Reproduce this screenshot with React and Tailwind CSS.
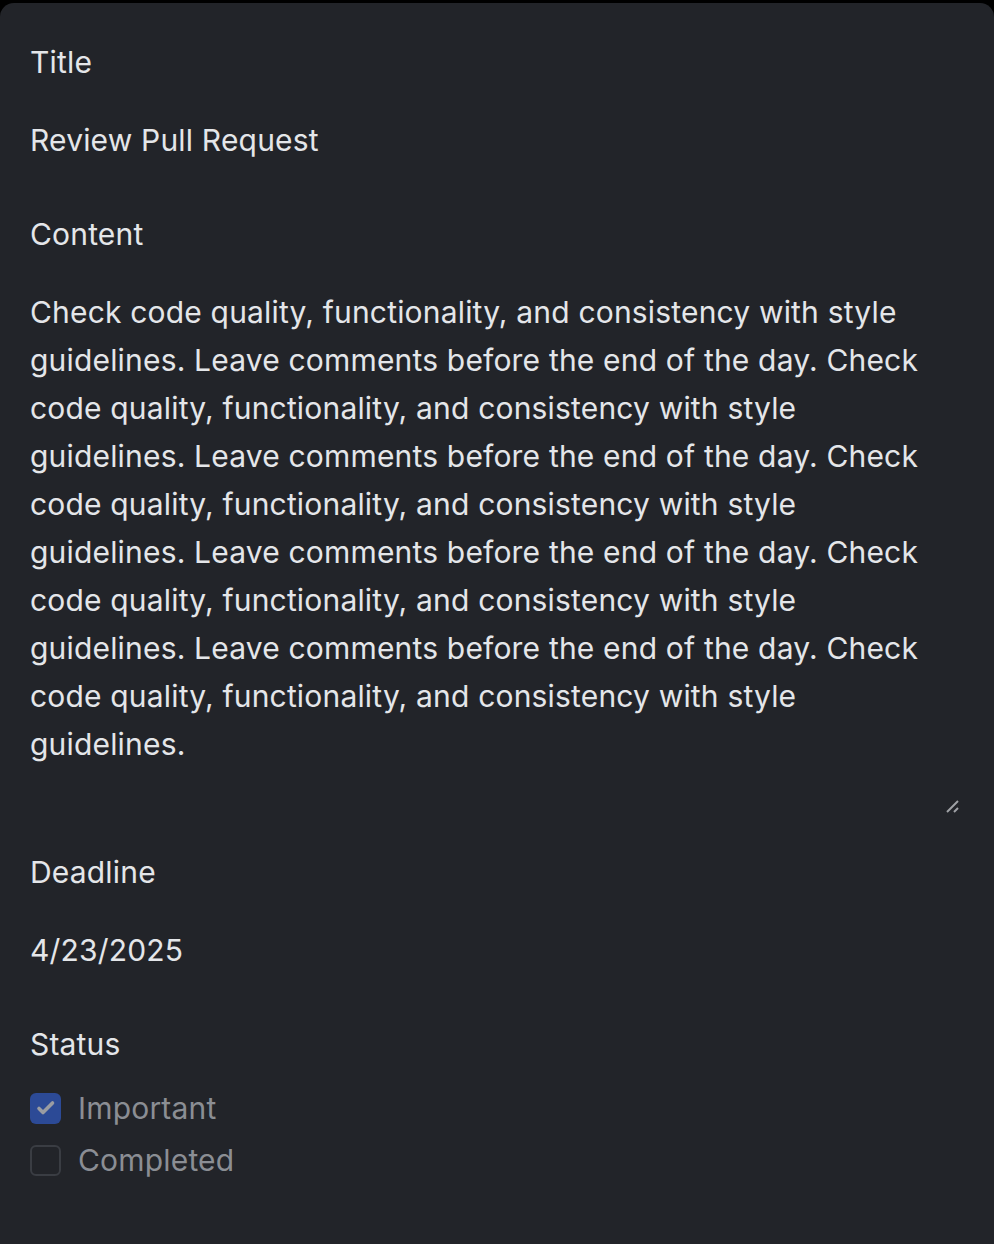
import React from "react";

const text =
  "Check code quality, functionality, and consistency with style guidelines. Leave comments before the end of the day. Check code quality, functionality, and consistency with style guidelines. Leave comments before the end of the day. Check code quality, functionality, and consistency with style guidelines. Leave comments before the end of the day. Check code quality, functionality, and consistency with style guidelines. Leave comments before the end of the day. Check code quality, functionality, and consistency with style guidelines.";

function Check({ checked, label }) {
  return (
    <div className="flex items-center gap-[17px] h-[30px]">
      {checked ? (
        <div className="w-[31px] h-[31px] rounded-[6px] bg-[#2c4a96]">
          <svg width="31" height="31" viewBox="0 0 31 31">
            <path d="M9 15.5 L13 19.5 L22.5 10" fill="none" stroke="#9a9ca2" strokeWidth="3.6" strokeLinecap="round" strokeLinejoin="round" />
          </svg>
        </div>
      ) : (
        <div className="w-[31px] h-[31px] rounded-[6px] border-2 border-[#3a3d43]" />
      )}
      <span className="text-[#8b8e94] leading-[30px]">{label}</span>
    </div>
  );
}

export default function App() {
  return (
    <div className="bg-black min-h-[1244px] pt-[3px] overflow-hidden" style={{ fontFamily: "Inter, 'Noto Sans', sans-serif" }}>
      <div className="bg-[#222429] rounded-t-[14px] min-h-[1241px] px-[30px] pt-[35px] text-[30px] leading-[48px] tracking-[0.006em] text-[#e4e6e9]">
        <div>Title</div>
        <div className="mt-[30px]">Review Pull Request</div>
        <div className="mt-[46px]">Content</div>
        <div className="relative mt-[30px] w-[933px]">
          <textarea
            readOnly
            value={text}
            className="block w-[925px] h-[528px] bg-transparent outline-none border-0 p-0 resize-none text-[#e4e6e9] leading-[48px] tracking-[0.006em] overflow-hidden"
            style={{ fontFamily: "inherit", fontSize: "30px" }}
          />
          <svg className="absolute right-[2px] bottom-[2px]" width="16" height="16" viewBox="0 0 16 16">
            <path d="M2 14 L13 3" stroke="#a0a2a6" strokeWidth="2" strokeLinecap="butt" />
            <path d="M9 14 L13 10" stroke="#a0a2a6" strokeWidth="2" strokeLinecap="butt" />
          </svg>
        </div>
        <div className="mt-[32px]">Deadline</div>
        <div className="mt-[30px]">4/23/2025</div>
        <div className="mt-[46px]">Status</div>
        <div className="mt-[25px] flex flex-col gap-[22px]">
          <Check checked label="Important" />
          <Check label="Completed" />
        </div>
      </div>
    </div>
  );
}
